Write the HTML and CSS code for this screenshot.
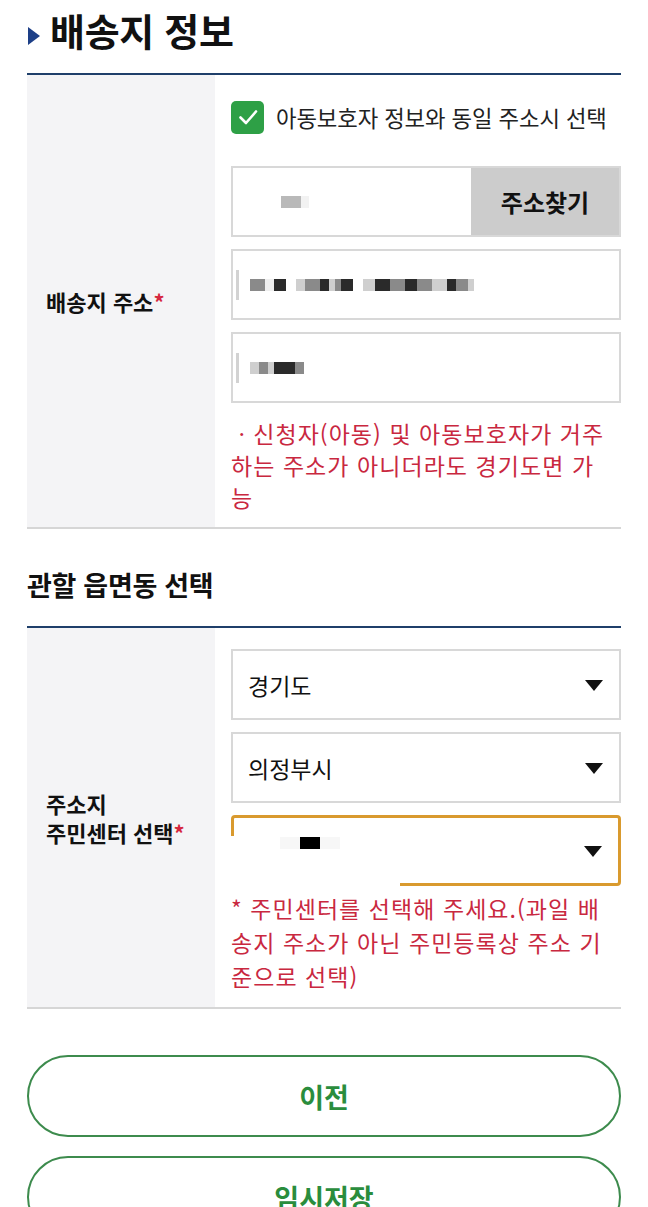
FILE: index.html
```html
<!DOCTYPE html>
<html lang="ko">
<head>
<meta charset="utf-8">
<link rel="stylesheet" href="styles.css">
</head>
<body>
<div class="page">
  <h1 class="title"><span class="marker"></span>배송지 정보</h1>

  <div class="table">
    <div class="label"><div>배송지 주소<span class="req">*</span></div></div>
    <div class="field">
      <label class="check">
        <span class="box">
          <svg width="22" height="22" viewBox="0 0 22 22"><path d="M3.5 11.5 L9 17 L19 5.5" fill="none" stroke="#fff" stroke-width="2.6" stroke-linecap="round" stroke-linejoin="round"/></svg>
        </span>
        <span class="check-text">아동보호자 정보와 동일 주소시 선택</span>
      </label>
      <div class="zip-row">
        <div class="input zip"><span class="blur b1"></span><span class="blur b2"></span></div>
        <button class="find">주소찾기</button>
      </div>
      <div class="input addr">
        <span class="cursor"></span>
        <span class="pix">
          <i class="p w6 g2"></i><i class="p w4 g4"></i><i class="p w5 g1"></i><i class="gap"></i>
          <i class="p w4 g3"></i><i class="p w6 g2"></i><i class="p w4 g1"></i><i class="p w3 g3"></i><i class="p w3 g2"></i><i class="p w5 g1"></i><i class="gap"></i>
          <i class="p w5 g3"></i><i class="p w6 g1"></i><i class="p w6 g2"></i><i class="p w5 g1"></i><i class="p w6 g2"></i><i class="p w6 g3"></i><i class="p w4 g1"></i><i class="p w5 g2"></i><i class="p w3 g3"></i>
        </span>
      </div>
      <div class="input addr">
        <span class="cursor"></span>
        <span class="pix">
          <i class="p w4 g3"></i><i class="p w4 g2"></i><i class="p w3 g3"></i><i class="p w3 g1"></i><i class="p w6 g1"></i><i class="p w4 g2"></i>
        </span>
      </div>
      <p class="note note1">ㆍ신청자(아동) 및 아동보호자가 거주하는 주소가 아니더라도 경기도면 가능</p>
    </div>
  </div>

  <h2 class="subtitle">관할 읍면동 선택</h2>

  <div class="table">
    <div class="label"><div>주소지<br>주민센터 선택<span class="req">*</span></div></div>
    <div class="field">
      <div class="select"><span>경기도</span><span class="caret"></span></div>
      <div class="select"><span>의정부시</span><span class="caret"></span></div>
      <div class="select focus"><span class="redact"></span><span class="caret"></span><span class="cover"></span></div>
      <p class="note note2">* 주민센터를 선택해 주세요.(과일 배송지 주소가 아닌 주민등록상 주소 기준으로 선택)</p>
    </div>
  </div>

  <div class="buttons">
    <button class="pill">이전</button>
    <button class="pill">임시저장</button>
  </div>
</div>
</body>
</html>
```

FILE: styles.css
```css
* { box-sizing: border-box; }
html, body { margin: 0; padding: 0; background: #fff; }
body {
  font-family: "Noto Sans CJK KR", "Noto Sans", sans-serif;
  color: #111;
  width: 648px;
  overflow: hidden;
}
.page {
  padding: 0 27px;
}
.title {
  margin: 0;
  height: 73px;
  display: flex;
  align-items: center;
  font-size: 38px;
  font-weight: 700;
  letter-spacing: -0.3px;
  padding-bottom: 14px;
  color: #111;
}
.marker {
  width: 0; height: 0;
  border-top: 9px solid transparent;
  border-bottom: 9px solid transparent;
  border-left: 12px solid #1d3f87;
  margin: 13px 10px 0 1px;
}
.table {
  display: grid;
  grid-template-columns: 188px 1fr;
  border-top: 2px solid #1f3f6a;
  border-bottom: 2px solid #d6d6d6;
}
.label {
  background: #f4f4f6;
  display: flex;
  align-items: center;
  padding-left: 19px;
  font-size: 22px;
  font-weight: 700;
  line-height: 29px;
  color: #111;
}
.req { color: #d6283f; }
.field {
  padding: 21px 0 14px 16px;
  display: flex;
  flex-direction: column;
  gap: 12px;
}
.check {
  display: flex;
  align-items: center;
  gap: 12px;
  height: 36px;
  margin: 3px 0 19px;
}
.box {
  width: 33px; height: 33px;
  border-radius: 5px;
  background: #2ea046;
  display: flex;
  align-items: center;
  justify-content: center;
}
.check-text {
  font-size: 22.3px;
  color: #222;
  letter-spacing: -0.1px;
}
.zip-row {
  display: flex;
  height: 71px;
  border: 2px solid #d8d8d8;
}
.input {
  height: 71px;
  border: 2px solid #d8d8d8;
  background: #fff;
  display: flex;
  align-items: center;
}
.zip {
  flex: 1;
  border: none;
  height: auto;
  padding-left: 48px;
}
.blur { display: inline-block; height: 12px; }
.b1 { width: 20px; background: #b9b9b9; }
.b2 { width: 8px; background: #f2f2f2; }
.find {
  width: 148px;
  border: none;
  background: #cccccc;
  font-family: inherit;
  font-size: 24px;
  font-weight: 700;
  color: #111;
  padding: 0;
}
.cursor {
  width: 3px; height: 30px;
  background: #d2d2d2;
  margin-left: 3px;
  margin-right: 11px;
}
.pix {
  display: flex;
  align-items: center;
  height: 14px;
}
.p { display: block; height: 12px; }
.gap { display: block; width: 10px; }
.w3 { width: 6px; } .w4 { width: 9px; } .w5 { width: 12px; } .w6 { width: 15px; }
.g1 { background: #2a2a2a; } .g2 { background: #8a8a8a; } .g3 { background: #cfcfcf; } .g4 { background: #eeeeee; }
.note {
  margin: 0;
  color: #c9283f;
  font-size: 23px;
  letter-spacing: 1.05px;
  word-break: break-all;
  padding-right: 10px;
}
.note1 { padding-top: 2px; line-height: 32px; }
.note2 { margin-top: -7px; line-height: 34px; }
.subtitle {
  margin: 0;
  height: 97px;
  display: flex;
  align-items: center;
  font-size: 27px;
  font-weight: 700;
  letter-spacing: -0.3px;
  padding-top: 14px;
}
.select {
  position: relative;
  height: 71px;
  border: 2px solid #d8d8d8;
  display: flex;
  align-items: center;
  justify-content: space-between;
  padding: 0 16px 0 15px;
  font-size: 23px;
  color: #111;
}
.select.focus {
  border: 3px solid #d99a2e;
  border-radius: 4px;
}
.caret {
  width: 0; height: 0;
  border-left: 9px solid transparent;
  border-right: 9px solid transparent;
  border-top: 11px solid #111;
  margin-top: 2px;
}
.redact {
  position: relative;
  z-index: 2;
  width: 20px; height: 12px;
  background: #000;
  margin-left: 51px;
  margin-top: -16px;
  box-shadow: -20px 0 0 #f7f7f7, 20px 0 0 #f7f7f7;
}
.cover {
  position: absolute;
  left: -14px;
  top: 18px;
  width: 180px;
  height: 56px;
  background: #fff;
  z-index: 1;
}
.buttons {
  padding-top: 46px;
  display: flex;
  flex-direction: column;
  gap: 19px;
}
.pill {
  height: 82px;
  border: 2px solid #3d8b4d;
  border-radius: 41px;
  background: #fff;
  font-family: inherit;
  font-size: 27px;
  font-weight: 700;
  color: #2a8d3d;
}
```
